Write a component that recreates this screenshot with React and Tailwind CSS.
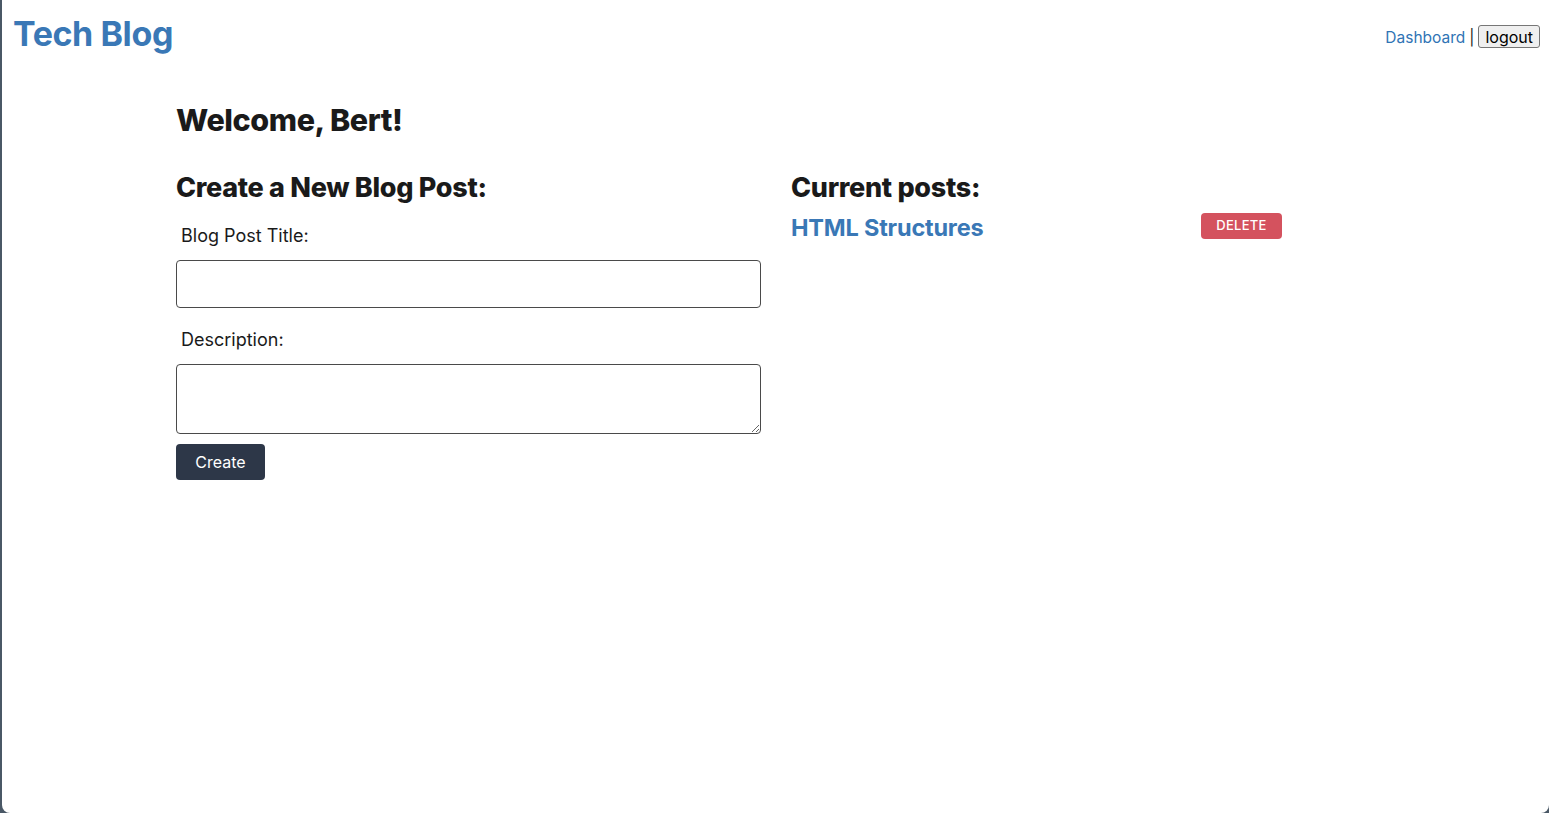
export default function App() {
  return (
    <div className="min-h-screen bg-[#4a5866]">
      <div
        className="ml-[2px] h-[813px] bg-white rounded-bl-[8px] rounded-br-[8px] text-[#1a1a1a]"
        style={{ fontFamily: 'Inter, "Noto Sans", sans-serif' }}
      >
        {/* header */}
        <header className="flex items-start justify-between pl-[11px] pr-[9px]">
          <a className="mt-[12px] text-[34px] font-bold leading-[44px] tracking-[-0.4px] text-[#3a78b6]">Tech Blog</a>
          <nav className="mt-[24px] flex items-center text-[15.5px]">
            <a className="pt-[2px] text-[#2f74b5]">Dashboard</a>
            <span className="ml-[4px] mr-[4px] pt-[2px]">|</span>
            <button className="h-[23px] rounded-[3px] border border-[#767676] bg-[#efefef] px-[6px] text-[16px] leading-[20px] text-black">
              logout
            </button>
          </nav>
        </header>

        <main className="pl-[174px]">
          <h1 className="mt-[46px] text-[30.5px] font-extrabold leading-[36px] tracking-[-0.4px]">Welcome, Bert!</h1>

          <div className="mt-[34px] flex gap-[30px]">
            {/* create form */}
            <section className="w-[585px]">
              <h2 className="text-[27px] font-extrabold leading-[32px] tracking-[-0.3px]">Create a New Blog Post:</h2>
              <label className="mt-[20px] block pl-[5px] text-[18px] leading-[24px]">Blog Post Title:</label>
              <input className="mt-[12px] block h-[48px] w-full rounded-[4px] border border-[#4a4a4a] px-3 outline-none" />
              <label className="mt-[20px] block pl-[5px] text-[18px] leading-[24px]">Description:</label>
              <textarea className="mt-[12px] block h-[70px] w-full rounded-[4px] border border-[#4a4a4a] px-3" />
              <button className="mt-[10px] h-[36px] w-[89px] rounded-[4px] bg-[#2d3748] text-[16px] text-white">Create</button>
            </section>

            {/* posts */}
            <section className="w-[491px]">
              <h2 className="text-[27px] font-extrabold leading-[32px] tracking-[-0.3px]">Current posts:</h2>
              <div className="mt-[9px] flex items-start justify-between">
                <a className="text-[23.5px] font-bold leading-[30px] tracking-[-0.2px] text-[#3a78b6]">HTML Structures</a>
                <button className="h-[26px] w-[81px] rounded-[4px] bg-[#d4525e] text-[13px] font-medium tracking-[0.3px] text-white">
                  DELETE
                </button>
              </div>
            </section>
          </div>
        </main>
      </div>
    </div>
  );
}
